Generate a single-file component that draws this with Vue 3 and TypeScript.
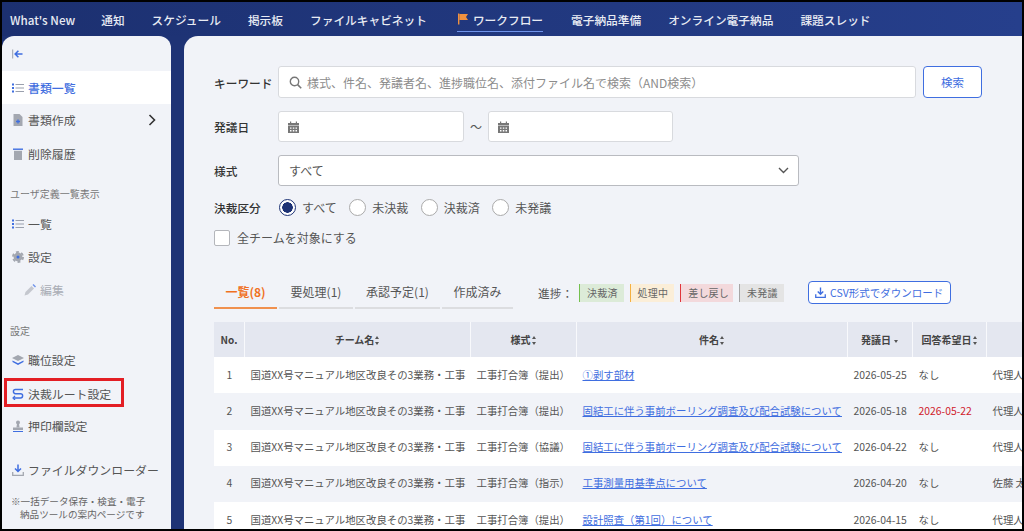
<script setup lang="ts">
const navItems = ['通知', 'スケジュール', '掲示板', 'ファイルキャビネット'];
const navItemsAfter = ['電子納品準備', 'オンライン電子納品', '課題スレッド'];

const team = '国道XX号マニュアル地区改良その3業務・工事';

const rows = [
  { no: 1, form: '工事打合簿（提出）', title: '①剥す部材', date: '2026-05-25', due: 'なし', owner: '代理人 花子' },
  { no: 2, form: '工事打合簿（提出）', title: '固結工に伴う事前ボーリング調査及び配合試験について', date: '2026-05-18', due: '2026-05-22', owner: '代理人 花子' },
  { no: 3, form: '工事打合簿（協議）', title: '固結工に伴う事前ボーリング調査及び配合試験について', date: '2026-04-22', due: 'なし', owner: '代理人 花子' },
  { no: 4, form: '工事打合簿（指示）', title: '工事測量用基準点について', date: '2026-04-20', due: 'なし', owner: '佐藤 太郎' },
  { no: 5, form: '工事打合簿（提出）', title: '設計照査（第1回）について', date: '2026-04-15', due: 'なし', owner: '代理人 花子' },
];

const radios = ['すべて', '未決裁', '決裁済', '未発議'];
const tabs = ['一覧(8)', '要処理(1)', '承認予定(1)', '作成済み'];
const chips = [
  { label: '決裁済', cls: 'chip-green' },
  { label: '処理中', cls: 'chip-orange' },
  { label: '差し戻し', cls: 'chip-red' },
  { label: '未発議', cls: 'chip-gray' },
];
</script>

<template>
  <div class="frame">
    <header class="topbar">
      <span class="nav-item first">What's New</span>
      <span v-for="item in navItems" :key="item" class="nav-item">{{ item }}</span>
      <span class="nav-item active">
        <svg width="12" height="12" viewBox="0 0 12 12"><path d="M1 0.5h1.4v11H1z" fill="#f0913f" /><path d="M2.4 1h8.6L9 4l2 3H2.4z" fill="#f0913f" /></svg>
        ワークフロー
      </span>
      <span v-for="item in navItemsAfter" :key="item" class="nav-item">{{ item }}</span>
    </header>

    <div class="body">
      <aside class="sidebar">
        <div class="collapse">
          <svg width="12" height="10" viewBox="0 0 12 10"><path d="M0.7 0.5v9" stroke="#9aa0ad" stroke-width="1" fill="none" /><path d="M10.5 5H3.6M6.4 1.8 3.2 5l3.2 3.2" stroke="#3f6ee0" stroke-width="1.6" fill="none" /></svg>
        </div>

        <div class="side-item current">
          <svg class="ico" viewBox="0 0 12 12"><g fill="#3f6ee0"><rect x="0" y="1.5" width="2" height="2" /><rect x="0" y="5" width="2" height="2" /><rect x="0" y="8.5" width="2" height="2" /></g><g fill="#9aa0ad"><rect x="3.5" y="2" width="8.5" height="1" /><rect x="3.5" y="5.5" width="8.5" height="1" /><rect x="3.5" y="9" width="8.5" height="1" /></g></svg>
          <span>書類一覧</span>
        </div>
        <div class="side-item create">
          <svg class="ico" viewBox="0 0 12 12"><path d="M1.5 0h6L10.5 3v9h-9z" fill="#a3a7b0" /><path d="M6 5.5v4M4 7.5h4" stroke="#3f6ee0" stroke-width="1.3" /></svg>
          <span>書類作成</span>
          <svg class="chev" width="8" height="12" viewBox="0 0 8 12"><path d="M1.5 1 6.5 6l-5 5" stroke="#333" stroke-width="1.6" fill="none" /></svg>
        </div>
        <div class="side-item">
          <svg class="ico" viewBox="0 0 12 12"><path d="M1 0.5h10v1.4H1z" fill="#3f6ee0" /><path d="M2 2.8h8V12H2z" fill="#a3a7b0" /></svg>
          <span>削除履歴</span>
        </div>

        <div class="side-label first-label">ユーザ定義一覧表示</div>
        <div class="side-item">
          <svg class="ico" viewBox="0 0 12 12"><g fill="#3f6ee0"><rect x="0" y="1.5" width="2" height="2" /><rect x="0" y="5" width="2" height="2" /><rect x="0" y="8.5" width="2" height="2" /></g><g fill="#9aa0ad"><rect x="3.5" y="2" width="8.5" height="1" /><rect x="3.5" y="5.5" width="8.5" height="1" /><rect x="3.5" y="9" width="8.5" height="1" /></g></svg>
          <span>一覧</span>
        </div>
        <div class="side-item">
          <svg class="ico" viewBox="0 0 12 12"><circle cx="6" cy="6" r="4.4" fill="#a3a7b0" /><circle cx="6" cy="6" r="5" fill="none" stroke="#a3a7b0" stroke-width="2" stroke-dasharray="2.8 2.44" /><circle cx="6" cy="6" r="1.5" fill="#3f6ee0" /></svg>
          <span>設定</span>
        </div>
        <div class="side-item sub">
          <svg class="ico" viewBox="0 0 12 12"><path d="M0.5 11.5 1.5 8 7.5 2l2.5 2.5-6 6z" fill="#c4c7ce" /><path d="M8.5 1 9.5 0l2.5 2.5-1 1z" fill="#6f93ea" /></svg>
          <span>編集</span>
        </div>

        <div class="side-label">設定</div>
        <div class="side-item tight">
          <svg class="ico" viewBox="0 0 12 12"><path d="M6 1 12 4 6 7 0 4z" fill="#a3a7b0" /><path d="M0.5 6.5 6 9.3l5.5-2.8v1.6L6 11 .5 8.1z" fill="#3f6ee0" /></svg>
          <span>職位設定</span>
        </div>
        <div class="side-item marked">
          <svg class="ico" viewBox="0 0 12 12"><path d="M11 1.5H3.5a2 2 0 0 0 0 4.2h5a2 2 0 0 1 0 4.3H1.5" stroke="#3f6ee0" stroke-width="1.4" fill="none" /><path d="M3 8 1 10l2 2" stroke="#3f6ee0" stroke-width="1.2" fill="none" /></svg>
          <span>決裁ルート設定</span>
        </div>
        <div class="side-item">
          <svg class="ico" viewBox="0 0 12 12"><circle cx="6" cy="2.4" r="2" fill="#a3a7b0" /><path d="M5 4h2l.6 3.5H4.4z" fill="#a3a7b0" /><path d="M1 7.5h10v2.5H1z" fill="#a3a7b0" /><path d="M1 11h10v1H1z" fill="#3f6ee0" /></svg>
          <span>押印欄設定</span>
        </div>
        <div class="side-item download">
          <svg class="ico" viewBox="0 0 12 12"><path d="M6 0.5v6.5M3 4.5 6 7.5l3-3" stroke="#3f6ee0" stroke-width="1.5" fill="none" /><path d="M0.7 8v3.3h10.6V8" stroke="#a3a7b0" stroke-width="1.3" fill="none" /></svg>
          <span>ファイルダウンローダー</span>
        </div>
        <div class="side-note">
          <div>※一括データ保存・検査・電子</div>
          <div class="note-indent">納品ツールの案内ページです</div>
        </div>
      </aside>

      <main class="main">
        <div class="form-row">
          <label class="form-label">キーワード</label>
          <div class="input keyword">
            <svg width="13" height="13" viewBox="0 0 13 13"><circle cx="5.5" cy="5.5" r="4.2" stroke="#777" stroke-width="1.4" fill="none" /><path d="m8.6 8.6 3.6 3.6" stroke="#777" stroke-width="1.6" /></svg>
            <span class="placeholder">様式、件名、発議者名、進捗職位名、添付ファイル名で検索（AND検索）</span>
          </div>
          <button class="search-btn">検索</button>
        </div>

        <div class="form-row">
          <label class="form-label">発議日</label>
          <div class="input date">
            <svg class="cal" viewBox="0 0 11 12"><path d="M0 2h11v2.5H0zM2 .5h1.2V2H2zM7.8 .5H9V2H7.8z" fill="#777" /><path d="M0 5h11v7H0z" fill="#777" /><path d="M2 6.4h1.5v1.4H2zM4.8 6.4h1.5v1.4H4.8zM7.5 6.4H9v1.4H7.5zM2 9h1.5v1.4H2zM4.8 9h1.5v1.4H4.8zM7.5 9H9v1.4H7.5z" fill="#fff" /></svg>
          </div>
          <span class="tilde">～</span>
          <div class="input date date-end">
            <svg class="cal" viewBox="0 0 11 12"><path d="M0 2h11v2.5H0zM2 .5h1.2V2H2zM7.8 .5H9V2H7.8z" fill="#777" /><path d="M0 5h11v7H0z" fill="#777" /><path d="M2 6.4h1.5v1.4H2zM4.8 6.4h1.5v1.4H4.8zM7.5 6.4H9v1.4H7.5zM2 9h1.5v1.4H2zM4.8 9h1.5v1.4H4.8zM7.5 9H9v1.4H7.5z" fill="#fff" /></svg>
          </div>
        </div>

        <div class="form-row">
          <label class="form-label">様式</label>
          <div class="input select">
            <span>すべて</span>
            <svg width="11" height="7" viewBox="0 0 11 7"><path d="m1 1 4.5 4.5L10 1" stroke="#555" stroke-width="1.4" fill="none" /></svg>
          </div>
        </div>

        <div class="radio-row">
          <label class="form-label">決裁区分</label>
          <div class="radios">
            <span v-for="(r, i) in radios" :key="r" class="radio">
              <span class="dot" :class="{ on: i === 0 }"></span>{{ r }}
            </span>
          </div>
        </div>

        <div class="check-row">
          <span class="checkbox"></span>
          <span>全チームを対象にする</span>
        </div>

        <div class="toolbar">
          <div class="tabs">
            <span v-for="(t, i) in tabs" :key="t" class="tab" :class="['tab-' + i, { on: i === 0 }]">{{ t }}</span>
          </div>
          <span class="progress">進捗：</span>
          <div class="chips">
            <span v-for="c in chips" :key="c.label" class="chip" :class="c.cls">{{ c.label }}</span>
          </div>
          <button class="csv-btn">
            <svg width="11" height="11" viewBox="0 0 12 12"><path d="M6 0.5v7M3 5l3 3 3-3" stroke="#3f6ee0" stroke-width="1.5" fill="none" /><path d="M0.8 8v3.2h10.4V8" stroke="#3f6ee0" stroke-width="1.4" fill="none" /></svg>
            CSV形式でダウンロード
          </button>
        </div>

        <table class="table">
          <colgroup>
            <col style="width: 31px" />
            <col style="width: 226px" />
            <col style="width: 106px" />
            <col style="width: 271px" />
            <col style="width: 65px" />
            <col style="width: 74px" />
            <col style="width: 90px" />
          </colgroup>
          <thead>
            <tr>
              <th>No.</th>
              <th>チーム名<i class="sort"></i></th>
              <th>様式<i class="sort"></i></th>
              <th>件名<i class="sort"></i></th>
              <th>発議日<i class="sort down"></i></th>
              <th>回答希望日<i class="sort"></i></th>
              <th></th>
            </tr>
          </thead>
          <tbody>
            <tr v-for="row in rows" :key="row.no">
              <td class="no">{{ row.no }}</td>
              <td>{{ team }}</td>
              <td>{{ row.form }}</td>
              <td><a class="link">{{ row.title }}</a></td>
              <td>{{ row.date }}</td>
              <td :class="{ late: row.due !== 'なし' }">{{ row.due }}</td>
              <td>{{ row.owner }}</td>
            </tr>
          </tbody>
        </table>
      </main>
    </div>
  </div>
</template>

<style>
html,
body {
  margin: 0;
  background: #000;
}
</style>

<style scoped>
.frame {
  box-sizing: border-box;
  height: 531px;
  width: 1024px;
  padding: 2px;
  background: #000;
  display: flex;
  flex-direction: column;
  overflow: hidden;
  font-family: "Noto Sans CJK JP", "Noto Sans", sans-serif;
  color: #555;
}

.topbar {
  height: 34px;
  flex-shrink: 0;
  display: flex;
  align-items: center;
  gap: 27px;
  padding-left: 8px;
  background: linear-gradient(90deg, #1c3070, #263f8c);
  color: #e8ebf3;
  font-size: 11.7px;
  font-weight: 500;
}

.nav-item {
  white-space: nowrap;
}

.nav-item.first {
  margin-right: -1px;
}

.nav-item.active {
  display: flex;
  align-items: center;
  gap: 4px;
  height: 24px;
  box-sizing: border-box;
  border-bottom: 1px solid #6f93ea;
  margin: 1px 1px 0 3px;
}

.body {
  flex: 1;
  min-height: 0;
  display: flex;
  gap: 13px;
  background: #1e3375;
}

.sidebar {
  width: 169px;
  flex-shrink: 0;
  background: #f1f3f8;
  border-top-left-radius: 12px;
  border-top-right-radius: 12px;
  font-size: 11.9px;
  color: #555;
}

.collapse {
  height: 35px;
  display: flex;
  align-items: center;
  padding-left: 10px;
}

.side-item {
  position: relative;
  height: 33px;
  display: flex;
  align-items: center;
  gap: 4px;
  padding-left: 10px;
}

.ico {
  width: 12px;
  height: 12px;
  flex-shrink: 0;
}

.side-item.current {
  background: #fff;
  color: #3f6ee0;
  font-weight: 500;
}

.side-item.create {
  margin-top: -1px;
  margin-bottom: 1px;
}

.chev {
  position: absolute;
  right: 15px;
  top: 11px;
}

.side-item.sub {
  padding-left: 22px;
  color: #a9adb5;
}

.side-item.tight {
  margin-top: -1px;
}

.side-item.marked {
  margin-top: 1px;
  margin-bottom: -1px;
}

.side-item.marked::after {
  content: "";
  position: absolute;
  left: 2px;
  top: 1px;
  width: 120px;
  height: 29px;
  box-sizing: border-box;
  border: 3px solid #e31e24;
}

.side-item.download {
  margin-top: 11px;
}

.side-label {
  height: 16px;
  line-height: 16px;
  margin: 17px 0 5px 8px;
  font-size: 10px;
  color: #777;
}

.side-label.first-label {
  margin-top: 16px;
}

.side-note {
  margin-top: 9px;
  padding-left: 9px;
  font-size: 9.6px;
  line-height: 13px;
  color: #666;
  white-space: nowrap;
}

.note-indent {
  padding-left: 9px;
}

.main {
  flex: 1;
  min-width: 0;
  background: #f1f3f8;
  border-top-left-radius: 14px;
  padding: 30px 0 0 30px;
  overflow: hidden;
  font-size: 12px;
}

.form-row {
  display: flex;
  align-items: center;
  margin-bottom: 13px;
}

.form-label {
  width: 64px;
  flex-shrink: 0;
  font-size: 11.7px;
  font-weight: 500;
  color: #333;
}

.input {
  box-sizing: border-box;
  height: 31px;
  background: #fff;
  border: 1px solid #d8dade;
  border-radius: 3px;
  display: flex;
  align-items: center;
  color: #555;
}

.keyword {
  width: 638px;
  height: 32px;
  padding-left: 10px;
  gap: 5px;
}

.placeholder {
  color: #8c8c8c;
  font-size: 12px;
}

.search-btn {
  box-sizing: border-box;
  width: 59px;
  height: 32px;
  margin-left: 7px;
  background: #fff;
  border: 1px solid #3f6ee0;
  border-radius: 4px;
  color: #3f6ee0;
  font: inherit;
  font-size: 11.5px;
}

.date {
  width: 186px;
  padding-left: 9px;
}

.date-end {
  width: 185px;
}

.cal {
  width: 11px;
  height: 12px;
}

.tilde {
  width: 24px;
  text-align: center;
  font-size: 12px;
}

.select {
  width: 521px;
  border-color: #b9bbc0;
  padding: 0 9px 0 10px;
  justify-content: space-between;
}

.radio-row {
  display: flex;
  align-items: center;
  height: 18px;
  margin-top: -1px;
}

.radio-row .form-label {
  width: 65px;
}

.radios {
  display: flex;
  gap: 12.5px;
}

.radio {
  display: flex;
  align-items: center;
  gap: 6px;
  color: #555;
}

.dot {
  box-sizing: border-box;
  width: 17px;
  height: 17px;
  border: 1px solid #aaa;
  border-radius: 50%;
  background: #fff;
}

.dot.on {
  border-color: #1e3375;
  background: radial-gradient(circle, #1e3375 0 5px, #fff 5.5px);
}

.check-row {
  display: flex;
  align-items: center;
  gap: 7px;
  margin-top: 13px;
  color: #555;
}

.checkbox {
  box-sizing: border-box;
  width: 16px;
  height: 16px;
  border: 1px solid #b4b6bb;
  border-radius: 2px;
  background: #fff;
}

.toolbar {
  display: flex;
  align-items: center;
  margin-top: 35px;
  height: 28px;
}

.tabs {
  display: flex;
  gap: 2px;
  height: 28px;
}

.tab {
  box-sizing: border-box;
  border-bottom: 2px solid #dcdde0;
  height: 28px;
  line-height: 22px;
  text-align: center;
  color: #555;
  font-size: 12px;
}

.tab-0 {
  width: 63px;
}

.tab-1 {
  width: 74px;
}

.tab-2 {
  width: 85px;
}

.tab-3 {
  width: 71px;
}

.tab.on {
  color: #f0711f;
  font-weight: 700;
  border-bottom-color: #f0914f;
}

.progress {
  margin-left: 25px;
  width: 41px;
  color: #555;
  font-size: 11.7px;
  margin-bottom: 5px;
}

.chips {
  display: flex;
  gap: 6px;
  margin-bottom: 5px;
}

.chip {
  box-sizing: border-box;
  height: 18px;
  line-height: 18px;
  font-size: 10px;
  padding: 0 6px 0 7px;
  border-left: 1px solid;
  color: #666;
  letter-spacing: 0.2px;
}

.chip-green {
  background: #dcebd8;
  border-color: #74c04e;
}

.chip-orange {
  background: #fbeed8;
  border-color: #f5b041;
}

.chip-red {
  background: #f3d9dc;
  border-color: #e0353b;
  padding-right: 4px;
}

.chip-gray {
  background: #e4e4e4;
  border-color: #a5a5a5;
}

.csv-btn {
  box-sizing: border-box;
  display: flex;
  align-items: center;
  justify-content: center;
  gap: 4px;
  width: 143px;
  height: 23px;
  margin-left: 24px;
  margin-bottom: 5px;
  padding: 0;
  background: #fff;
  border: 1px solid #3f6ee0;
  border-radius: 4px;
  color: #3f6ee0;
  font: inherit;
  font-size: 10.5px;
}

.table {
  margin-top: 13px;
  width: 863px;
  table-layout: fixed;
  border-collapse: separate;
  border-spacing: 0;
  font-size: 10.4px;
  color: #555;
}

th {
  height: 35px;
  padding: 0;
  background: #e4e7f0;
  border-right: 1px solid #f8f9fc;
  font-size: 10px;
  font-weight: 700;
  color: #444;
  text-align: center;
  white-space: nowrap;
}

.sort {
  display: inline-block;
  position: relative;
  width: 5px;
  height: 9px;
  margin-left: 1px;
  vertical-align: -1px;
}

.sort::before,
.sort::after {
  content: "";
  position: absolute;
  left: 0;
  border-left: 2.5px solid transparent;
  border-right: 2.5px solid transparent;
}

.sort::before {
  top: 0;
  border-bottom: 3.5px solid #555;
}

.sort::after {
  bottom: 0;
  border-top: 3.5px solid #555;
}

.sort.down {
  margin-left: 3px;
}

.sort.down::before {
  display: none;
}

.sort.down::after {
  bottom: 2px;
}

td {
  box-sizing: border-box;
  height: 36.25px;
  padding: 0 0 2px 5.5px;
  white-space: nowrap;
  overflow: hidden;
  background: #fff;
}

tbody tr:nth-child(even) td {
  background: #f1f3f8;
}

td.no {
  padding: 0 0 2px;
  text-align: center;
}

.link {
  color: #3f6ee0;
  text-decoration: underline;
}

.late {
  color: #d0202c;
}
</style>
